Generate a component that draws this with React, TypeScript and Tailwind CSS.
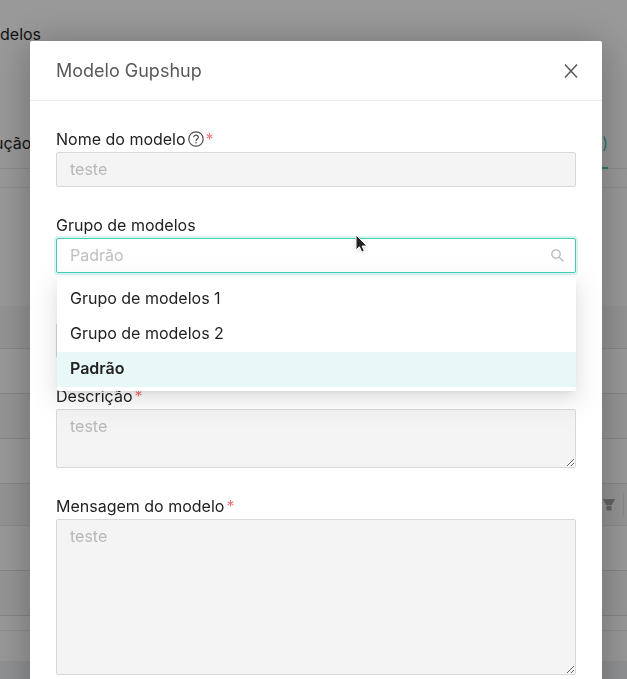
import { useState, type ReactNode } from 'react';
import { clsx } from 'clsx';

const GROUPS = ['Grupo de modelos 1', 'Grupo de modelos 2', 'Padrão'];

const FIELD = 'block w-full rounded-xs border border-[#d9d9d9] bg-[#f4f4f4] px-[13px] text-base text-black placeholder:text-[#b8b8b8]';

export default function App() {
  return (
    <div className="h-screen overflow-hidden bg-white font-[Inter,sans-serif] text-base text-[#222]">
      <TemplatesPage />

      {/* Mask */}
      <div className="fixed inset-0 overflow-hidden bg-black/40 pt-[41px] pr-[25px] pl-[30px]">
        <TemplateModal />
      </div>
    </div>
  );
}

// ─── Page behind the modal ──────────────────────────────────────────────────────

function TemplatesPage() {
  return (
    <div aria-hidden="true">
      <h1 className="h-[119px] pt-[22px] leading-6">delos</h1>

      {/* Tabs */}
      <div className="flex h-[50px] justify-between border-b border-[#ebebeb] pr-[19px]">
        <span className="-ml-1.5 pt-3 leading-6">ução</span>
        <span className="-mb-px border-b-2 border-[#40cdb9] pt-3 pl-9 leading-6 text-[#40cdb9]">)</span>
      </div>

      <div className="mt-[18px] border-y border-[#ebebeb] pt-[118px] pb-[14px]">
        <div className="h-[43px] border-b border-[#e4e4e4] bg-[#f7f7f7]" />
        <TableRow />
        <TableRow striped />
        <TableRow />
        <div className="flex h-[42px] items-center justify-end gap-2 border-b border-[#e8e8e8] bg-[#f7f7f7] pr-[3px]">
          <svg width="12" height="12" viewBox="0 0 12 12" fill="#a8a8a8">
            <path d="M0 0h12L8.8 6H3.200zM3.500 6.700h5V11.500h-5z" />
          </svg>
          <div className="h-6 w-px bg-[#e4e4e4]" />
        </div>
        <TableRow />
        <TableRow striped />
      </div>
      <div className="mt-[30px] h-8 bg-[#f0f2f5]" />
    </div>
  );
}

function TableRow({ striped = false }: { striped?: boolean }) {
  return <div className={clsx('h-[45px] border-b border-[#e0e0e0]', striped && 'bg-[#f9f9f9]')} />;
}

// ─── Modal ──────────────────────────────────────────────────────────────────────

function TemplateModal() {
  return (
    <div
      role="dialog"
      aria-labelledby="modal-title"
      className="min-h-screen rounded-xs bg-white shadow-[0_4px_40px_rgba(0,0,0,0.3)]"
    >
      {/* Header */}
      <div className="flex h-[60px] items-center justify-between border-b border-[#ebebeb] px-[26px]">
        <h2 id="modal-title" className="text-lg text-[#595959]">Modelo Gupshup</h2>
        <button type="button" aria-label="Fechar" className="-mr-2.5 p-2 text-[#595959]">
          <svg width="14" height="14" viewBox="0 0 14 14" fill="none" stroke="currentColor" strokeWidth="1.5">
            <path d="M1 .5l12 13M13 .5l-12 13" />
          </svg>
        </button>
      </div>

      {/* Body */}
      <form className="flex flex-col gap-[26px] p-[26px]">
        <Field id="name" label="Nome do modelo" help required>
          <input id="name" disabled placeholder="teste" className={clsx(FIELD, 'h-[35px] pb-0.5')} />
        </Field>
        <GroupSelect />
        <input disabled aria-label="Categoria" className={clsx(FIELD, 'mt-6 h-[35px]')} />
        <Field id="description" label="Descrição" required>
          <textarea id="description" disabled placeholder="teste" className={clsx(FIELD, 'h-[59px] resize-y py-1')} />
        </Field>
        <Field id="message" label="Mensagem do modelo" required>
          <textarea id="message" disabled placeholder="teste" className={clsx(FIELD, 'h-[156px] resize-y py-1')} />
        </Field>
      </form>
    </div>
  );
}

interface FieldProps {
  id: string;
  label: string;
  help?: boolean;
  required?: boolean;
  children: ReactNode;
}

function Field({ id, label, help, required, children }: FieldProps) {
  return (
    <div>
      <label htmlFor={id} className="flex h-[25px] items-center pb-px leading-6">
        {label}
        {help && <HelpIcon />}
        {required && <span className="ml-0.5 text-[#f5767c]">*</span>}
      </label>
      {children}
    </div>
  );
}

function GroupSelect() {
  const [selected, setSelected] = useState('Padrão');

  return (
    <Field id="group" label="Grupo de modelos">
      <div className="relative">
        <input
          id="group"
          role="combobox"
          aria-expanded="true"
          aria-controls="group-list"
          placeholder={selected}
          className="block h-[35px] w-full rounded-xs border border-[#45cfbb] bg-white pr-9 pb-0.5 pl-[13px] text-base shadow-[0_0_0_2px_rgba(64,205,185,0.2)] outline-none placeholder:text-[#bfbfbf]"
        />
        <svg className="absolute top-[11px] right-3" width="13" height="13" viewBox="0 0 13 13" fill="none" stroke="#b8b8b8" strokeWidth="1.3">
          <circle cx="5" cy="5" r="4.200" />
          <path d="M8 8l4.500 4.500" />
        </svg>
        <MouseCursor />

        {/* Options */}
        <div
          id="group-list"
          role="listbox"
          className="absolute top-full right-0 left-px z-10 mt-1 rounded-xs bg-white pt-[5px] pb-1 shadow-[0_9px_28px_8px_rgba(0,0,0,0.05),0_6px_16px_rgba(0,0,0,0.08),0_3px_6px_-4px_rgba(0,0,0,0.12)]"
        >
          {GROUPS.map((group) => (
            <button
              key={group}
              type="button"
              role="option"
              aria-selected={group === selected}
              onClick={() => setSelected(group)}
              className={clsx(
                'block h-[35px] w-full px-[13px] pb-[3px] text-left',
                group === selected && 'bg-[#e8f8f7] font-semibold'
              )}
            >
              {group}
            </button>
          ))}
        </div>
      </div>
    </Field>
  );
}

// ─── Icons ──────────────────────────────────────────────────────────────────────

function HelpIcon() {
  return (
    <svg className="ml-0.5" width="16" height="16" viewBox="0 0 16 16" fill="none" stroke="#4d4d4d" strokeWidth="1.2">
      <circle cx="8" cy="8" r="7.200" />
      <path d="M5.700 6.300a2.300 2.100 0 1 1 3.600 1.700c-.8.5-1.300.8-1.300 1.900" />
      <circle cx="8" cy="11.700" r=".75" fill="#4d4d4d" stroke="none" />
    </svg>
  );
}

function MouseCursor() {
  return (
    <svg className="pointer-events-none absolute -top-1 left-[299px] z-20 drop-shadow-sm" width="13" height="20" viewBox="0 0 13 20">
      <path d="M1 1v15l3.400-3.200L6.700 18l2.600-1.100L7.100 12H12z" fill="#222" stroke="#fff" strokeWidth="1" />
    </svg>
  );
}
